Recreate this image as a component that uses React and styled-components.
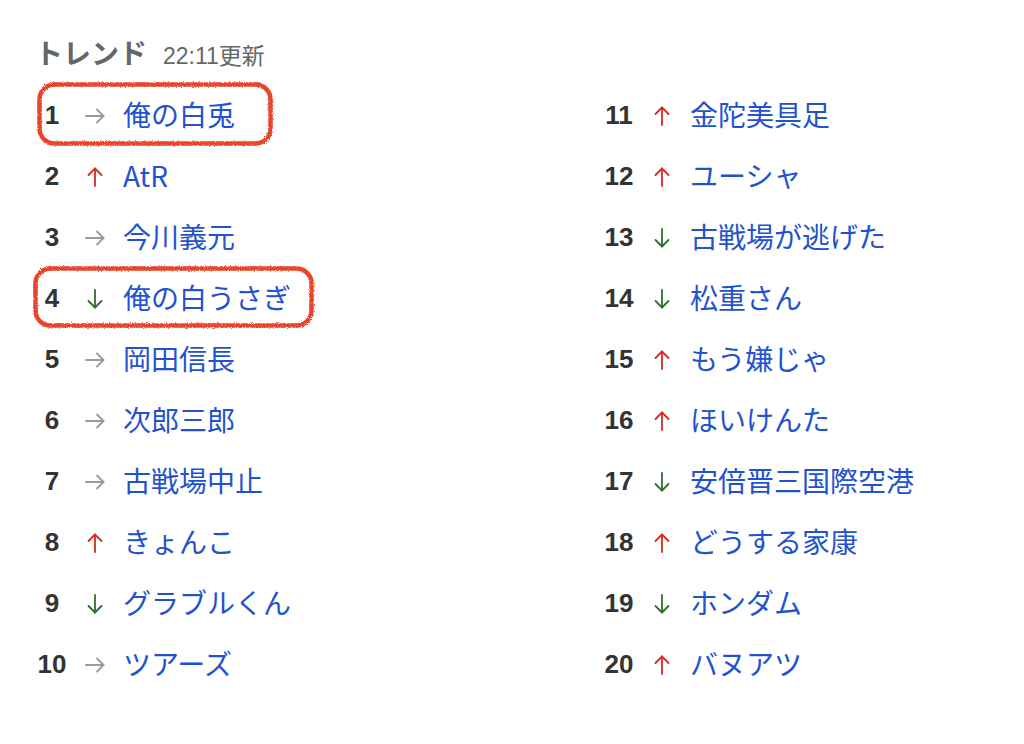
import React from "react";
import styled, { createGlobalStyle } from "styled-components";

const Global = createGlobalStyle`
  html, body { margin: 0; padding: 0; background: #ffffff; }
  body { font-family: "Liberation Sans", "Noto Sans CJK JP", sans-serif; }
`;

const Page = styled.div`
  padding: 34px 0 0 35px;
  width: 1024px;
  height: 744px;
  box-sizing: border-box;
`;

const Header = styled.div`
  display: flex;
  align-items: baseline;
  gap: 16px;
  height: 36px;
  line-height: 36px;
`;

const Title = styled.h2`
  margin: 0;
  font-family: "Noto Sans CJK JP", sans-serif;
  font-size: 28px;
  font-weight: 700;
  color: #666666;
`;

const Updated = styled.span`
  font-family: "Liberation Sans", "Noto Sans CJK JP", sans-serif;
  font-size: 23px;
  color: #666666;
`;

const List = styled.ol`
  list-style: none;
  margin: 15px 0 0 1px;
  padding: 0;
  display: grid;
  grid-template-columns: 567px 1fr;
  grid-template-rows: repeat(10, 61px);
  grid-auto-flow: column;
`;

const Row = styled.li`
  position: relative;
  display: flex;
  align-items: center;
`;

const Rank = styled.span`
  width: 32px;
  text-align: center;
  font-family: "Liberation Sans", sans-serif;
  font-weight: 700;
  font-size: 26px;
  color: #333333;
`;

const ArrowBox = styled.span`
  display: flex;
  align-items: center;
  justify-content: center;
  width: 22px;
  height: 22px;
  margin-left: 16px;
  color: ${(p) => p.$color};
`;

const Word = styled.a`
  margin: 0 0 4px 17px;
  font-family: "Noto Sans CJK JP", sans-serif;
  font-size: 28px;
  color: #2352cf;
  text-decoration: none;
  white-space: nowrap;
`;

const Ring = styled.svg`
  position: absolute;
  left: ${(p) => p.$left}px;
  top: ${(p) => p.$top}px;
  overflow: visible;
  pointer-events: none;
`;

const ARROW_COLORS = { same: "#9a9a9a", up: "#d8281f", down: "#2d6e2d" };

function Arrow({ dir }) {
  const color = ARROW_COLORS[dir];
  return (
    <ArrowBox $color={color}>
      <svg width="22" height="22" viewBox="0 0 22 22" fill="none" stroke="currentColor" strokeWidth="1.8" strokeLinecap="round" strokeLinejoin="round">
        {dir === "same" && (
          <>
            <path d="M2 11 H19.5" />
            <path d="M13 4.5 L19.5 11 L13 17.5" />
          </>
        )}
        {dir === "up" && (
          <>
            <path d="M11 2.5 V20" />
            <path d="M4.5 9 L11 2.5 L17.5 9" />
          </>
        )}
        {dir === "down" && (
          <>
            <path d="M11 2 V19.5" />
            <path d="M4.5 13 L11 19.5 L17.5 13" />
          </>
        )}
      </svg>
    </ArrowBox>
  );
}

function HandRing({ left, top, width, height, id }) {
  return (
    <Ring $left={left} $top={top} width={width} height={height} viewBox={`0 0 ${width} ${height}`}>
      <defs>
        <filter id={id} x="-5%" y="-10%" width="110%" height="120%">
          <feTurbulence type="fractalNoise" baseFrequency="0.8" numOctaves="2" seed="3" />
          <feDisplacementMap in="SourceGraphic" scale="3" />
        </filter>
      </defs>
      <rect
        x="2.5"
        y="2.5"
        width={width - 5}
        height={height - 5}
        rx="15"
        ry="15"
        fill="none"
        stroke="#e8452c"
        strokeWidth="4.5"
        filter={`url(#${id})`}
      />
    </Ring>
  );
}

const trends = [
  { n: 1, d: "same", w: "俺の白兎", ring: { left: 1, top: -3, width: 236, height: 64 } },
  { n: 2, d: "up", w: "AtR" },
  { n: 3, d: "same", w: "今川義元" },
  { n: 4, d: "down", w: "俺の白うさぎ", ring: { left: -3, top: -2, width: 281, height: 62 } },
  { n: 5, d: "same", w: "岡田信長" },
  { n: 6, d: "same", w: "次郎三郎" },
  { n: 7, d: "same", w: "古戦場中止" },
  { n: 8, d: "up", w: "きょんこ" },
  { n: 9, d: "down", w: "グラブルくん" },
  { n: 10, d: "same", w: "ツアーズ" },
  { n: 11, d: "up", w: "金陀美具足" },
  { n: 12, d: "up", w: "ユーシャ" },
  { n: 13, d: "down", w: "古戦場が逃げた" },
  { n: 14, d: "down", w: "松重さん" },
  { n: 15, d: "up", w: "もう嫌じゃ" },
  { n: 16, d: "up", w: "ほいけんた" },
  { n: 17, d: "down", w: "安倍晋三国際空港" },
  { n: 18, d: "up", w: "どうする家康" },
  { n: 19, d: "down", w: "ホンダム" },
  { n: 20, d: "up", w: "バヌアツ" },
];

export default function App() {
  return (
    <Page>
      <Global />
      <Header>
        <Title>トレンド</Title>
        <Updated>22:11更新</Updated>
      </Header>
      <List>
        {trends.map((t) => (
          <Row key={t.n}>
            <Rank>{t.n}</Rank>
            <Arrow dir={t.d} />
            <Word href="#">{t.w}</Word>
            {t.ring && <HandRing id={`ring${t.n}`} {...t.ring} />}
          </Row>
        ))}
      </List>
    </Page>
  );
}
